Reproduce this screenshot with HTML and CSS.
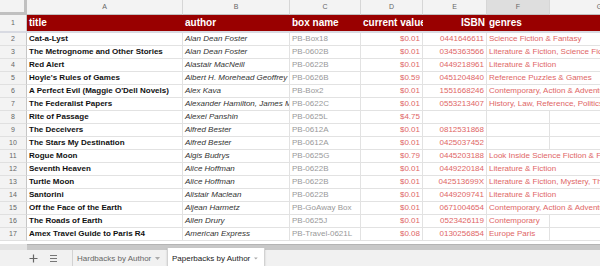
FILE: index.html
```html
<!DOCTYPE html>
<html lang="en">
<head>
    <meta charset="UTF-8">
    <title>Paperbacks by Author</title>
    <link rel="stylesheet" href="styles.css">
</head>
<body>
    <div class="sheet">
        <div class="grid">
            <div class="row cols">
                <div class="corner"></div>
                <div class="col">A</div>
                <div class="col">B</div>
                <div class="col">C</div>
                <div class="col">D</div>
                <div class="col">E</div>
                <div class="col active">F</div>
                <div class="col">G</div>
            </div>
            <div class="row head">
                <div class="num">1</div>
                <div class="cell">title</div>
                <div class="cell">author</div>
                <div class="cell">box name</div>
                <div class="cell">current value</div>
                <div class="cell right">ISBN</div>
                <div class="cell">genres</div>
                <div class="cell"></div>
            </div>

            <div class="row"><div class="num">2</div><div class="cell t">Cat-a-Lyst</div><div class="cell au">Alan Dean Foster</div><div class="cell bx">PB-Box18</div><div class="cell v">$0.01</div><div class="cell v">0441646611</div><div class="cell g spill">Science Fiction &amp; Fantasy</div></div>
            <div class="row"><div class="num">3</div><div class="cell t">The Metrognome and Other Stories</div><div class="cell au">Alan Dean Foster</div><div class="cell bx">PB-0602B</div><div class="cell v">$0.01</div><div class="cell v">0345363566</div><div class="cell g spill">Literature &amp; Fiction, Science Fiction &amp; Fantasy</div></div>
            <div class="row"><div class="num">4</div><div class="cell t">Red Alert</div><div class="cell au">Alastair MacNeill</div><div class="cell bx">PB-0622B</div><div class="cell v">$0.01</div><div class="cell v">0449218961</div><div class="cell g spill">Literature &amp; Fiction</div></div>
            <div class="row"><div class="num">5</div><div class="cell t">Hoyle's Rules of Games</div><div class="cell au">Albert H. Morehead Geoffrey Mott-Smith</div><div class="cell bx">PB-0626B</div><div class="cell v">$0.59</div><div class="cell v">0451204840</div><div class="cell g spill">Reference Puzzles &amp; Games</div></div>
            <div class="row"><div class="num">6</div><div class="cell t">A Perfect Evil (Maggie O'Dell Novels)</div><div class="cell au">Alex Kava</div><div class="cell bx">PB-Box2</div><div class="cell v">$0.01</div><div class="cell v">1551668246</div><div class="cell g spill">Contemporary, Action &amp; Adventure</div></div>
            <div class="row"><div class="num">7</div><div class="cell t">The Federalist Papers</div><div class="cell au">Alexander Hamilton, James Madison</div><div class="cell bx">PB-0622C</div><div class="cell v">$0.01</div><div class="cell v">0553213407</div><div class="cell g spill">History, Law, Reference, Politics</div></div>
            <div class="row"><div class="num">8</div><div class="cell t">Rite of Passage</div><div class="cell au">Alexei Panshin</div><div class="cell bx">PB-0625L</div><div class="cell v">$4.75</div><div class="cell v"></div><div class="cell g"></div><div class="cell"></div></div>
            <div class="row"><div class="num">9</div><div class="cell t">The Deceivers</div><div class="cell au">Alfred Bester</div><div class="cell bx">PB-0612A</div><div class="cell v">$0.01</div><div class="cell v">0812531868</div><div class="cell g"></div><div class="cell"></div></div>
            <div class="row"><div class="num">10</div><div class="cell t">The Stars My Destination</div><div class="cell au">Alfred Bester</div><div class="cell bx">PB-0612A</div><div class="cell v">$0.01</div><div class="cell v">0425037452</div><div class="cell g"></div><div class="cell"></div></div>
            <div class="row"><div class="num">11</div><div class="cell t">Rogue Moon</div><div class="cell au">Algis Budrys</div><div class="cell bx">PB-0625G</div><div class="cell v">$0.79</div><div class="cell v">0445203188</div><div class="cell g spill">Look Inside Science Fiction &amp; Fantasy</div></div>
            <div class="row"><div class="num">12</div><div class="cell t">Seventh Heaven</div><div class="cell au">Alice Hoffman</div><div class="cell bx">PB-0622B</div><div class="cell v">$0.01</div><div class="cell v">0449220184</div><div class="cell g spill">Literature &amp; Fiction</div></div>
            <div class="row"><div class="num">13</div><div class="cell t">Turtle Moon</div><div class="cell au">Alice Hoffman</div><div class="cell bx">PB-0622B</div><div class="cell v">$0.01</div><div class="cell v">042513699X</div><div class="cell g spill">Literature &amp; Fiction, Mystery, Thriller</div></div>
            <div class="row"><div class="num">14</div><div class="cell t">Santorini</div><div class="cell au">Alistair Maclean</div><div class="cell bx">PB-0622B</div><div class="cell v">$0.01</div><div class="cell v">0449209741</div><div class="cell g spill">Literature &amp; Fiction</div></div>
            <div class="row"><div class="num">15</div><div class="cell t">Off the Face of the Earth</div><div class="cell au">Aljean Harmetz</div><div class="cell bx">PB-GoAway Box</div><div class="cell v">$0.01</div><div class="cell v">0671004654</div><div class="cell g spill">Contemporary, Action &amp; Adventure</div></div>
            <div class="row"><div class="num">16</div><div class="cell t">The Roads of Earth</div><div class="cell au">Allen Drury</div><div class="cell bx">PB-0625J</div><div class="cell v">$0.01</div><div class="cell v">0523426119</div><div class="cell g">Contemporary</div><div class="cell"></div></div>
            <div class="row"><div class="num">17</div><div class="cell t">Amex Travel Guide to Paris R4</div><div class="cell au">American Express</div><div class="cell bx">PB-Travel-0621L</div><div class="cell v">$0.08</div><div class="cell v">0130256854</div><div class="cell g">Europe Paris</div><div class="cell"></div></div>
        </div>

        <div class="hscroll">
            <div class="track-left"></div>
            <div class="thumb"></div>
        </div>

        <div class="tabs">
            <div class="tab-tools">
                <svg class="tool" width="9" height="9" viewBox="0 0 9 9"><path d="M4.5 0.5v8M0.5 4.5h8" stroke="#666" stroke-width="1.2"/></svg>
                <svg class="tool" width="9" height="9" viewBox="0 0 9 9"><path d="M1 1.5h7M1 4.5h7M1 7.5h7" stroke="#777" stroke-width="1"/></svg>
            </div>
            <div class="tab">
                Hardbacks by Author
                <svg width="5" height="3" viewBox="0 0 5 3"><path d="M0 0h5L2.5 3z" fill="#aaa"/></svg>
            </div>
            <div class="tab current">
                Paperbacks by Author
                <svg width="5" height="3" viewBox="0 0 5 3"><path d="M0 0h5L2.5 3z" fill="#aaa"/></svg>
            </div>
        </div>
    </div>
</body>
</html>
```

FILE: styles.css
```css
* {
    box-sizing: border-box;
}
body {
    margin: 0;
    font-family: "Liberation Sans", Arial, sans-serif;
    background: #fff;
    overflow: hidden;
}
.sheet {
    width: 600px;
    height: 266px;
    display: flex;
    flex-direction: column;
    overflow: hidden;
}
.grid {
    height: 244px;
    flex-shrink: 0;
    overflow: hidden;
}
.row {
    display: grid;
    grid-template-columns: 27px 156px 107px 71px 62px 64px 63px 100px;
    width: 650px;
    height: 13px;
}
.cell {
    border-right: 1px solid #e2e2e2;
    border-bottom: 1px solid #e2e2e2;
    padding: 0 2px;
    font-size: 8px;
    line-height: 12px;
    white-space: nowrap;
    overflow: hidden;
}
.num {
    background: #f3f3f3;
    border-right: 1px solid #c6c6c6;
    border-bottom: 1px solid #e0e0e0;
    color: #666;
    font-size: 7px;
    line-height: 12px;
    text-align: center;
}

/* column letters */
.cols {
    height: 15px;
}
.corner {
    background: #f3f3f3;
    border-right: 3px solid #c0c0c0;
    border-bottom: 3px solid #c0c0c0;
}
.col {
    background: #f3f3f3;
    border-right: 1px solid #d6d6d6;
    border-bottom: 1px solid #c0c0c0;
    color: #666;
    font-size: 7px;
    line-height: 14px;
    text-align: center;
}
.col.active {
    background: #dedede;
}

/* frozen header row */
.head {
    height: 18px;
    border-bottom: 2px solid #d8dae2;
}
.head .num {
    line-height: 16px;
    border-bottom: none;
}
.head .cell {
    background: #990000;
    color: #fff;
    font-size: 10px;
    font-weight: bold;
    line-height: 16px;
    border: none;
}
.right {
    text-align: right;
}

/* data cells */
.t {
    font-weight: bold;
    color: #111;
}
.au {
    font-style: italic;
    color: #333;
}
.bx {
    color: #999;
}
.v {
    color: #e06666;
    text-align: right;
}
.g {
    color: #e06666;
}
.spill {
    grid-column: span 2;
}

/* scrollbar */
.hscroll {
    height: 6px;
    flex-shrink: 0;
    display: flex;
}
.track-left {
    width: 27px;
    background: #e4e4e4;
}
.thumb {
    flex: 1;
    background: #c8c8c8;
    border-top: 1px solid #b4b4b4;
}

/* sheet tabs */
.tabs {
    height: 16px;
    flex-shrink: 0;
    background: #f1f1f1;
    display: flex;
    font-size: 8px;
    color: #666;
    white-space: nowrap;
}
.tab-tools {
    width: 72px;
    flex-shrink: 0;
    display: flex;
    align-items: center;
    padding-left: 29px;
    gap: 11px;
}
.tab {
    display: flex;
    align-items: center;
    flex-shrink: 0;
    gap: 4px;
    padding: 0 6px 0 4px;
    border-left: 1px solid #d2d2d2;
    width: 95px;
}
.tab.current {
    background: #fff;
    color: #222;
    width: 98px;
    border-right: 1px solid #d2d2d2;
    margin-top: -2px;
    padding-top: 2px;
    box-shadow: 0 1px 2px rgba(0, 0, 0, 0.15);
}
```
